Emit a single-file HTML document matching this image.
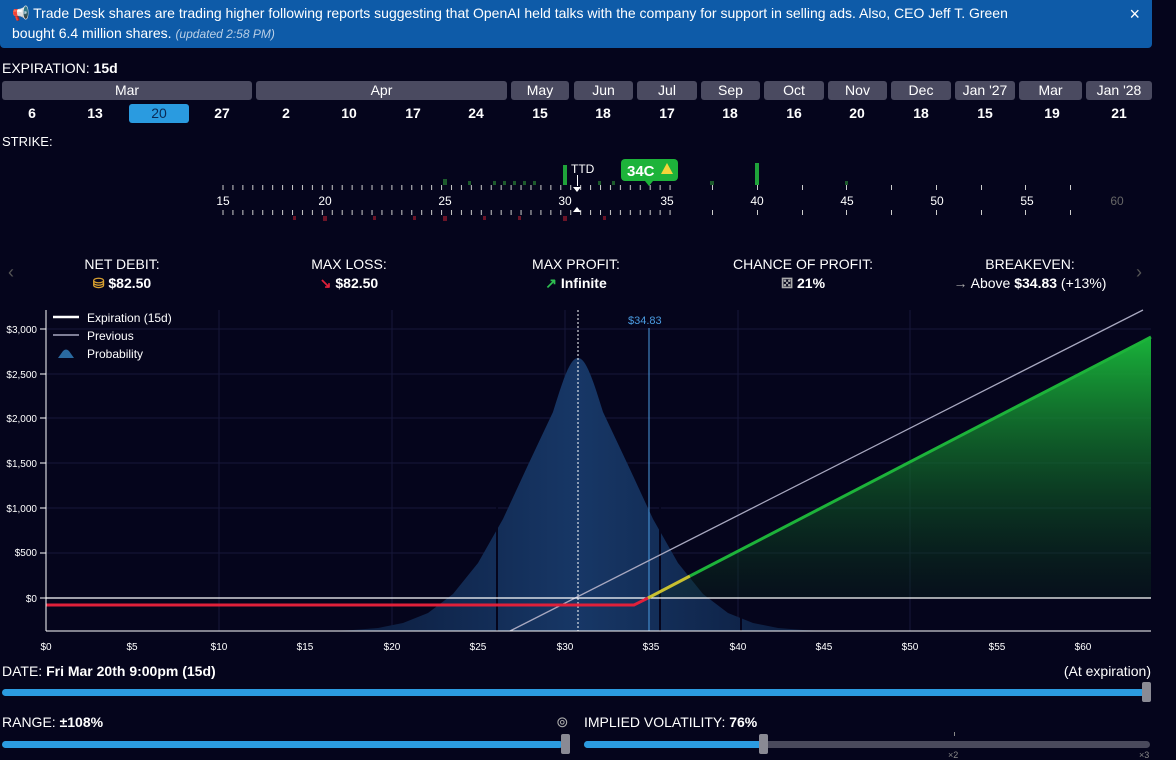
<!DOCTYPE html>
<html><head><meta charset="utf-8"><style>
*{margin:0;padding:0;box-sizing:border-box}
body{width:1176px;height:757px;background:#05051c;color:#fff;font-family:"Liberation Sans",sans-serif;overflow:hidden;position:relative}
.banner{position:absolute;left:0;top:0;width:1152px;height:48px;background:#0e5ba8;border-radius:0 0 4px 4px;font-size:14px;line-height:20px;padding:3px 100px 3px 12px;color:#fff}
.banner i{color:#b9cfe6;font-size:12px}
.x{position:absolute;right:12px;top:4px;font-size:18px}
.lbl{position:absolute;font-size:13px;color:#fff}
.pill{position:absolute;top:81px;height:19px;background:#4a4a60;border-radius:3px;text-align:center;font-size:14px;line-height:19px;color:#fff}
.day{position:absolute;top:104px;height:19px;width:60px;text-align:center;font-size:14px;font-weight:bold;line-height:19px}
.stat{position:absolute;width:220px;text-align:center;font-size:14px;top:255px;line-height:19px}
.stat b{display:block}
.bar{position:absolute;height:7px;border-radius:4px;background:#2b9be0}
.h{position:absolute;width:9px;height:20px;background:#8a8a94;border-radius:2px}
</style></head><body>
<div class="banner">📢 Trade Desk shares are trading higher following reports suggesting that OpenAI held talks with the company for support in selling ads. Also, CEO Jeff T. Green bought 6.4 million shares. <i>(updated 2:58 PM)</i><span class="x">×</span></div>
<div class="lbl" style="left:2px;top:60px;font-size:14px">EXPIRATION: <b>15d</b></div>
<div class="pill" style="left:2px;width:250px">Mar</div>
<div class="pill" style="left:256px;width:251px">Apr</div>
<div class="pill" style="left:511px;width:58px">May</div>
<div class="pill" style="left:574px;width:59px">Jun</div>
<div class="pill" style="left:637px;width:60px">Jul</div>
<div class="pill" style="left:701px;width:59px">Sep</div>
<div class="pill" style="left:764px;width:60px">Oct</div>
<div class="pill" style="left:828px;width:59px">Nov</div>
<div class="pill" style="left:891px;width:60px">Dec</div>
<div class="pill" style="left:955px;width:60px">Jan '27</div>
<div class="pill" style="left:1019px;width:63px">Mar</div>
<div class="pill" style="left:1086px;width:66px">Jan '28</div>
<div class="day" style="left:2px">6</div><div class="day" style="left:65px">13</div>
<div class="day" style="left:129px;background:#2a9be0;border-radius:3px;font-weight:normal;color:#0a2a55">20</div>
<div class="day" style="left:192px">27</div><div class="day" style="left:256px">2</div><div class="day" style="left:319px">10</div><div class="day" style="left:383px">17</div><div class="day" style="left:446px">24</div><div class="day" style="left:510px">15</div><div class="day" style="left:573px">18</div><div class="day" style="left:637px">17</div><div class="day" style="left:700px">18</div><div class="day" style="left:764px">16</div><div class="day" style="left:827px">20</div><div class="day" style="left:891px">18</div><div class="day" style="left:955px">15</div><div class="day" style="left:1022px">19</div><div class="day" style="left:1089px">21</div>
<div class="lbl" style="left:2px;top:134px">STRIKE:</div>

<svg style="position:absolute;left:0;top:150px" width="1176" height="80">
<defs><pattern id="tk" x="218" y="0" width="9.935" height="80" patternUnits="userSpaceOnUse"><rect x="4.5" y="35" width="1" height="5" fill="#ccc"/><rect x="4.5" y="60" width="1" height="5" fill="#ccc"/></pattern></defs>
<rect x="218" y="0" width="460" height="80" fill="url(#tk)"/>
<g fill="#1c5a2c"><rect x="443" y="29" width="4" height="6"/><rect x="468" y="31" width="3" height="4"/><rect x="493" y="31" width="3" height="4"/><rect x="503" y="31" width="3" height="4"/><rect x="513" y="31" width="3" height="4"/><rect x="523" y="31" width="3" height="4"/><rect x="533" y="31" width="3" height="4"/><rect x="598" y="31" width="3" height="4"/><rect x="612" y="31" width="3" height="4"/><rect x="710" y="31" width="4" height="4"/><rect x="845" y="31" width="3" height="4"/></g>
<rect x="563" y="15" width="4" height="20" fill="#1fa33a"/><rect x="755" y="13" width="4" height="22" fill="#1fa33a"/>
<g fill="#6a1428"><rect x="293" y="66" width="3" height="4"/><rect x="323" y="66" width="4" height="5"/><rect x="373" y="66" width="3" height="4"/><rect x="413" y="66" width="3" height="4"/><rect x="443" y="66" width="4" height="5"/><rect x="483" y="66" width="3" height="4"/><rect x="518" y="66" width="3" height="4"/><rect x="563" y="66" width="4" height="5"/><rect x="603" y="66" width="3" height="4"/></g>
<g fill="#ccc"><rect x="712" y="35" width="1" height="5"/><rect x="757" y="35" width="1" height="5"/><rect x="802" y="35" width="1" height="5"/><rect x="846" y="35" width="1" height="5"/><rect x="891" y="35" width="1" height="5"/><rect x="936" y="35" width="1" height="5"/><rect x="981" y="35" width="1" height="5"/><rect x="1025" y="35" width="1" height="5"/><rect x="1070" y="35" width="1" height="5"/>
<rect x="712" y="60" width="1" height="5"/><rect x="757" y="60" width="1" height="5"/><rect x="802" y="60" width="1" height="5"/><rect x="846" y="60" width="1" height="5"/><rect x="891" y="60" width="1" height="5"/><rect x="936" y="60" width="1" height="5"/><rect x="981" y="60" width="1" height="5"/><rect x="1025" y="60" width="1" height="5"/><rect x="1070" y="60" width="1" height="5"/></g>
<g font-size="12" fill="#fff" text-anchor="middle"><text x="223" y="55">15</text><text x="325" y="55">20</text><text x="445" y="55">25</text><text x="565" y="55">30</text><text x="667" y="55">35</text><text x="757" y="55">40</text><text x="847" y="55">45</text><text x="937" y="55">50</text><text x="1027" y="55">55</text><text x="1117" y="55" fill="#666">60</text></g>
<text x="571" y="23" font-size="12" fill="#fff">TTD</text><rect x="577" y="25" width="1" height="11" fill="#fff"/>
<path d="M573 37h8l-4 5z M577 57l4 5h-8z" fill="#fff"/>
<rect x="621" y="9" width="57" height="22" rx="4" fill="#1db33a"/><path d="M645 31h8l-4 5z" fill="#1db33a"/>
<text x="627" y="26" font-size="15" font-weight="bold" fill="#fff">34C</text><path d="M667 13l6 11h-12z" fill="#f3d43a"/>
</svg>

<div style="position:absolute;left:8px;top:262px;color:#555;font-size:18px">‹</div>
<div style="position:absolute;left:1136px;top:262px;color:#555;font-size:18px">›</div>
<div class="stat" style="left:12px">NET DEBIT:<b><span style="color:#d8a030">⛁</span> $82.50</b></div>
<div class="stat" style="left:239px">MAX LOSS:<b><span style="color:#e0203a">↘</span> $82.50</b></div>
<div class="stat" style="left:466px">MAX PROFIT:<b><span style="color:#2ec050">↗</span> Infinite</b></div>
<div class="stat" style="left:693px">CHANCE OF PROFIT:<b><span style="color:#aaa">⚄</span> 21%</b></div>
<div class="stat" style="left:920px">BREAKEVEN:<b style="font-weight:normal"><span style="color:#aaa">→</span> Above <b style="display:inline">$34.83</b> (+13%)</b></div>

<svg style="position:absolute;left:0;top:300px" width="1176" height="360">
<defs>
<linearGradient id="bg" x1="0" y1="0" x2="1" y2="0"><stop offset="0" stop-color="#0b1a3a"/><stop offset="0.5" stop-color="#173766"/><stop offset="1" stop-color="#0b1a3a"/></linearGradient>
<linearGradient id="gg" x1="0" y1="0" x2="0" y2="1"><stop offset="0" stop-color="#19b33a"/><stop offset="1" stop-color="#0a2a1a" stop-opacity="0.3"/></linearGradient>
</defs>
<g stroke="#16183a" stroke-width="1"><line x1="46" y1="29" x2="1151" y2="29"/><line x1="46" y1="74" x2="1151" y2="74"/><line x1="46" y1="118" x2="1151" y2="118"/><line x1="46" y1="163" x2="1151" y2="163"/><line x1="46" y1="208" x2="1151" y2="208"/><line x1="46" y1="253" x2="1151" y2="253"/>
<line x1="219" y1="10" x2="219" y2="331"/><line x1="392" y1="10" x2="392" y2="331"/><line x1="565" y1="10" x2="565" y2="331"/><line x1="738" y1="10" x2="738" y2="331"/><line x1="910" y1="10" x2="910" y2="331"/></g>
<path d="M328 331 L353 330 L378 328 L403 323 L428 313 L453 294 L478 263 L503 219 L528 165 L553 112 C563 80 570 58 578 58 C586 58 593 80 603 112 L628 165 L653 219 L678 263 L703 294 L728 313 L753 323 L778 328 L803 330 L828 331Z" fill="url(#bg)"/>
<g stroke="#05051c" stroke-width="2"><line x1="497" y1="190" x2="497" y2="331"/><line x1="660" y1="200" x2="660" y2="331"/><line x1="741" y1="290" x2="741" y2="331"/></g>
<path d="M648 298 L1151 37 L1151 298Z" fill="url(#gg)"/>
<line x1="578" y1="10" x2="578" y2="331" stroke="#fff" stroke-dasharray="2,2"/>
<line x1="649" y1="28" x2="649" y2="331" stroke="#4a9be0"/>
<text x="628" y="24" font-size="11" fill="#4a9be0">$34.83</text>
<line x1="510" y1="331" x2="1143" y2="10" stroke="#a8a8c0" stroke-width="1.3"/>
<line x1="46" y1="298" x2="1151" y2="298" stroke="#fff" stroke-width="1.2"/>
<path d="M46 305 L634 305 L648 298" fill="none" stroke="#e0203a" stroke-width="3"/>
<path d="M648 298 L690 276" stroke="#c8c030" stroke-width="3"/>
<path d="M690 276 L1151 37" stroke="#1db33a" stroke-width="3"/>
<line x1="46" y1="10" x2="46" y2="331" stroke="#fff"/><line x1="46" y1="331" x2="1151" y2="331" stroke="#fff"/>
<g font-size="10" fill="#fff" text-anchor="end"><text x="37" y="33">$3,000</text><text x="37" y="78">$2,500</text><text x="37" y="122">$2,000</text><text x="37" y="167">$1,500</text><text x="37" y="212">$1,000</text><text x="37" y="256">$500</text><text x="37" y="302">$0</text></g>
<g stroke="#fff"><line x1="40" y1="29" x2="46" y2="29"/><line x1="40" y1="74" x2="46" y2="74"/><line x1="40" y1="118" x2="46" y2="118"/><line x1="40" y1="163" x2="46" y2="163"/><line x1="40" y1="208" x2="46" y2="208"/><line x1="40" y1="253" x2="46" y2="253"/><line x1="40" y1="298" x2="46" y2="298"/></g>
<g font-size="10" fill="#fff" text-anchor="middle"><text x="46" y="350">$0</text><text x="132" y="350">$5</text><text x="219" y="350">$10</text><text x="305" y="350">$15</text><text x="392" y="350">$20</text><text x="478" y="350">$25</text><text x="565" y="350">$30</text><text x="651" y="350">$35</text><text x="738" y="350">$40</text><text x="824" y="350">$45</text><text x="910" y="350">$50</text><text x="997" y="350">$55</text><text x="1083" y="350">$60</text></g>
<line x1="53" y1="17" x2="79" y2="17" stroke="#fff" stroke-width="2.5"/><line x1="53" y1="35" x2="79" y2="35" stroke="#a8a8c0" stroke-width="1.5"/>
<path d="M58 58 L63 51 Q66 48 69 51 L74 58Z" fill="#2a6aa0"/>
<g font-size="12" fill="#fff"><text x="87" y="22">Expiration (15d)</text><text x="87" y="40">Previous</text><text x="87" y="58">Probability</text></g>
</svg>

<div class="lbl" style="left:2px;top:663px;font-size:14px">DATE: <b>Fri Mar 20th 9:00pm (15d)</b></div>
<div class="lbl" style="right:25px;top:663px;font-size:14px">(At expiration)</div>
<div class="bar" style="left:2px;top:689px;width:1143px"></div><div class="h" style="left:1142px;top:682px"></div>
<div class="lbl" style="left:2px;top:714px;font-size:14px">RANGE: <b>±108%</b></div>
<div class="lbl" style="left:556px;top:713px;font-size:15px;color:#aaa">⊚</div>
<div class="lbl" style="left:584px;top:714px;font-size:14px">IMPLIED VOLATILITY: <b>76%</b></div>
<div class="bar" style="left:2px;top:741px;width:561px"></div><div class="h" style="left:561px;top:734px"></div>
<div class="bar" style="left:584px;top:741px;width:566px;background:#4a4a5c"></div>
<div class="bar" style="left:584px;top:741px;width:178px"></div><div class="h" style="left:759px;top:734px"></div>
<div style="position:absolute;left:954px;top:732px;width:1px;height:4px;background:#888"></div>
<div style="position:absolute;left:948px;top:750px;font-size:9px;color:#888">×2</div>
<div style="position:absolute;left:1139px;top:750px;font-size:9px;color:#888">×3</div>
</body></html>
